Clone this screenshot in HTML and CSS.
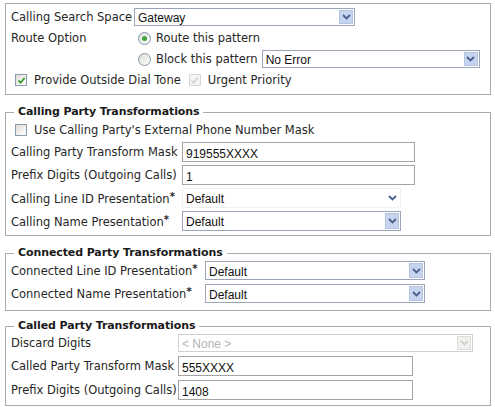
FILE: index.html
```html
<!DOCTYPE html>
<html lang="en">
<head>
    <meta charset="UTF-8">
    <title>Route Pattern Configuration</title>
    <link rel="stylesheet" href="styles.css">
</head>
<body>
    <div class="page">

        <fieldset class="group group-route">
            <div class="rows">
                <span class="label">Calling Search Space</span>
                <div class="select w-css">
                    <span class="value">Gateway</span>
                    <span class="arrow"><svg width="9" height="6" viewBox="0 0 9 6"><path d="M1 1 L4.5 4.5 L8 1" fill="none" stroke="#4a5f8c" stroke-width="1.8"/></svg></span>
                </div>

                <span class="label">Route Option</span>
                <div class="option">
                    <span class="radio checked"><span class="dot"></span></span>
                    <span>Route this pattern</span>
                </div>

                <span class="label"></span>
                <div class="option">
                    <span class="radio"></span>
                    <span>Block this pattern</span>
                    <div class="select w-block">
                        <span class="value">No Error</span>
                        <span class="arrow"><svg width="9" height="6" viewBox="0 0 9 6"><path d="M1 1 L4.5 4.5 L8 1" fill="none" stroke="#4a5f8c" stroke-width="1.8"/></svg></span>
                    </div>
                </div>

                <div class="option span-all">
                    <span class="check"><svg width="9" height="9" viewBox="0 0 9 9"><path d="M1.5 4.5 L3.6 6.8 L7.6 2" fill="none" stroke="#2a9a2a" stroke-width="1.7"/></svg></span>
                    <span>Provide Outside Dial Tone</span>
                    <span class="check disabled"><svg width="9" height="9" viewBox="0 0 9 9"><path d="M1.5 4.5 L3.6 6.8 L7.6 2" fill="none" stroke="#c9d3c9" stroke-width="1.5"/></svg></span>
                    <span>Urgent Priority</span>
                </div>
            </div>
        </fieldset>

        <fieldset class="group group-calling">
            <legend>Calling Party Transformations</legend>
            <div class="rows">
                <div class="option span-all">
                    <span class="check"></span>
                    <span>Use Calling Party's External Phone Number Mask</span>
                </div>

                <span class="label">Calling Party Transform Mask</span>
                <div class="input w-calling">919555XXXX</div>

                <span class="label">Prefix Digits (Outgoing Calls)</span>
                <div class="input w-calling">1</div>

                <span class="label">Calling Line ID Presentation<span class="req">*</span></span>
                <div class="select faint w-calling-sel">
                    <span class="value">Default</span>
                    <span class="arrow"><svg width="9" height="6" viewBox="0 0 9 6"><path d="M1 1 L4.5 4.5 L8 1" fill="none" stroke="#4a5f8c" stroke-width="1.8"/></svg></span>
                </div>

                <span class="label">Calling Name Presentation<span class="req">*</span></span>
                <div class="select w-calling-sel">
                    <span class="value">Default</span>
                    <span class="arrow"><svg width="9" height="6" viewBox="0 0 9 6"><path d="M1 1 L4.5 4.5 L8 1" fill="none" stroke="#4a5f8c" stroke-width="1.8"/></svg></span>
                </div>
            </div>
        </fieldset>

        <fieldset class="group group-connected">
            <legend>Connected Party Transformations</legend>
            <div class="rows">
                <span class="label">Connected Line ID Presentation<span class="req">*</span></span>
                <div class="select w-connected">
                    <span class="value">Default</span>
                    <span class="arrow"><svg width="9" height="6" viewBox="0 0 9 6"><path d="M1 1 L4.5 4.5 L8 1" fill="none" stroke="#4a5f8c" stroke-width="1.8"/></svg></span>
                </div>

                <span class="label">Connected Name Presentation<span class="req">*</span></span>
                <div class="select w-connected">
                    <span class="value">Default</span>
                    <span class="arrow"><svg width="9" height="6" viewBox="0 0 9 6"><path d="M1 1 L4.5 4.5 L8 1" fill="none" stroke="#4a5f8c" stroke-width="1.8"/></svg></span>
                </div>
            </div>
        </fieldset>

        <fieldset class="group group-called">
            <legend>Called Party Transformations</legend>
            <div class="rows">
                <span class="label">Discard Digits</span>
                <div class="select disabled w-discard">
                    <span class="value">&lt; None &gt;</span>
                    <span class="arrow"><svg width="9" height="6" viewBox="0 0 9 6"><path d="M1 1 L4.5 4.5 L8 1" fill="none" stroke="#c8c8c8" stroke-width="1.5"/></svg></span>
                </div>

                <span class="label">Called Party Transform Mask</span>
                <div class="input w-called">555XXXX</div>

                <span class="label">Prefix Digits (Outgoing Calls)</span>
                <div class="input w-called">1408</div>
            </div>
        </fieldset>

    </div>
</body>
</html>
```

FILE: styles.css
```css
body {
    margin: 0;
    font-family: "DejaVu Sans", Verdana, sans-serif;
    font-size: 11.5px;
    color: #262626;
    background: #fff;
}
.page {
    padding: 3px 0 0 5px;
}
.group {
    box-sizing: border-box;
    width: 486px;
    margin: 0;
    padding: 4px 5px 5px 5px;
    border: 1px solid #ababab;
}
.group legend {
    margin-left: 3px;
    padding: 0 4px;
    line-height: 14px;
    font-size: 11px;
    font-weight: bold;
    letter-spacing: -0.1px;
    color: #1a1a1a;
}
.rows {
    display: grid;
    align-items: center;
    row-gap: 3px;
}
.span-all {
    grid-column: 1 / -1;
}
.group-route .rows {
    grid-template-columns: 123px auto;
    grid-auto-rows: 18px;
}
.group-calling {
    margin-top: 10px;
    padding-top: 2px;
    padding-bottom: 4px;
}
.group-calling .rows {
    grid-template-columns: 171px auto;
    grid-template-rows: 18px repeat(4, 20px);
}
.group-connected {
    margin-top: 10px;
    padding-top: 1px;
    padding-bottom: 7px;
}
.group-connected .rows {
    grid-template-columns: 194px auto;
    grid-auto-rows: 19px;
    row-gap: 4px;
}
.group-called {
    margin-top: 8px;
    padding-top: 1px;
}
.group-called .rows {
    grid-template-columns: 167px auto;
    grid-template-rows: 18px 20px 20px;
    row-gap: 4px;
}
.label {
    white-space: nowrap;
}
.req {
    font-size: 10px;
    font-weight: bold;
    vertical-align: 3px;
}
.option {
    display: flex;
    align-items: center;
    white-space: nowrap;
}
.group-route .option:not(.span-all) {
    padding-left: 4px;
}

/* radio buttons and checkboxes */
.radio {
    box-sizing: border-box;
    width: 13px;
    height: 13px;
    margin-right: 5px;
    border: 1px solid #8094ad;
    border-radius: 50%;
    background: linear-gradient(135deg, #dcdcd6, #ffffff);
    display: flex;
    align-items: center;
    justify-content: center;
}
.radio .dot {
    width: 5px;
    height: 5px;
    border-radius: 50%;
    background: #3fa43f;
}
.check {
    box-sizing: border-box;
    width: 12px;
    height: 12px;
    margin: 0 7px 0 4px;
    border: 1px solid #8a9bb0;
    background: linear-gradient(135deg, #dedcd4, #ffffff);
    display: flex;
    align-items: center;
    justify-content: center;
}
.check.disabled {
    margin-left: 8px;
    border-color: #d4d8d4;
    background: #f4f4f4;
}

/* fake select boxes */
.select {
    box-sizing: border-box;
    height: 100%;
    display: flex;
    align-items: center;
    border: 1px solid #9aa6b8;
    background: #fff;
    font-family: "Liberation Sans", Arial, sans-serif;
    font-size: 12px;
}
.select .value {
    flex: 1;
    padding: 2px 0 0 3px;
    color: #111;
}
.select .arrow {
    box-sizing: border-box;
    width: 14px;
    height: calc(100% - 2px);
    margin-right: 1px;
    display: flex;
    align-items: center;
    justify-content: center;
    background: #c6d4ef;
    border: 1px solid #b4c3e0;
}
.select.faint {
    border-color: #f0f0f0;
}
.select.faint .arrow {
    background: none;
    border: none;
}
.select.disabled {
    border-color: #d0d0d0;
}
.select.disabled .value {
    color: #b4b4b4;
}
.select.disabled .arrow {
    background: #f0f0ec;
    border-color: #dcdcdc;
}
.w-css { width: 221px; }
.w-block { width: 218px; height: 18px; margin-left: 4px; }
.w-calling-sel { width: 219px; }
.w-connected { width: 220px; }
.w-discard { width: 295px; }

/* text inputs */
.input {
    box-sizing: border-box;
    height: 100%;
    padding: 4px 0 0 3px;
    border: 1px solid #a4a4a4;
    background: #fff;
    color: #111;
    font-family: "Liberation Sans", Arial, sans-serif;
    font-size: 12px;
    line-height: 14px;
}
.w-calling { width: 233px; }
.w-called { width: 235px; }
```
